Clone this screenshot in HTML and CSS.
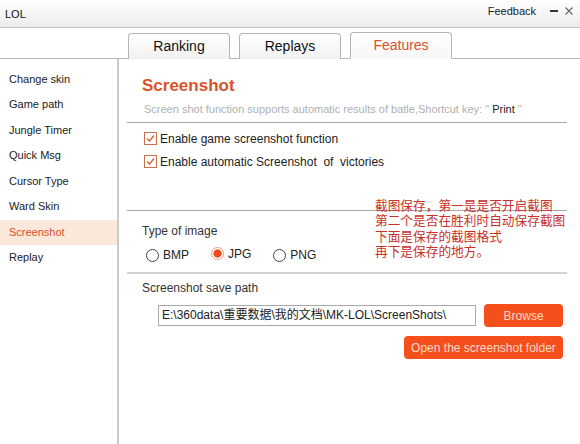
FILE: index.html
```html
<!DOCTYPE html>
<html lang="zh-CN">
<head>
  <meta charset="UTF-8">
  <title>LOL</title>
  <link rel="stylesheet" href="styles.css">
</head>
<body>

  <div class="titlebar">
    <span class="app-name">LOL</span>
    <div class="title-actions">
      <span class="feedback">Feedback</span>
      <span class="win-btn">
        <svg width="10" height="10" viewBox="0 0 10 10"><rect x="1" y="4" width="8" height="2" fill="#333"/></svg>
      </span>
      <span class="win-btn">
        <svg width="10" height="10" viewBox="0 0 10 10"><path d="M1.5 1.5 L8.5 8.5 M8.5 1.5 L1.5 8.5" stroke="#666" stroke-width="1.1"/></svg>
      </span>
    </div>
  </div>

  <div class="tabbar">
    <div class="tab">Ranking</div>
    <div class="tab">Replays</div>
    <div class="tab active">Features</div>
  </div>

  <div class="main">
    <ul class="sidebar">
      <li>Change skin</li>
      <li>Game path</li>
      <li>Jungle Timer</li>
      <li>Quick Msg</li>
      <li>Cursor Type</li>
      <li>Ward Skin</li>
      <li class="selected">Screenshot</li>
      <li>Replay</li>
    </ul>

    <div class="content">
      <div class="section head">
        <h2>Screenshot</h2>
        <p class="hint">Screen shot function supports automatic results of batle,Shortcut key: " <span class="key">Print</span> "</p>
      </div>

      <div class="section options">
        <label class="check"><span class="box"><svg width="11" height="11" viewBox="0 0 11 11"><path d="M2 5.5 L4.5 8 L9 2.5" fill="none" stroke="#d8582c" stroke-width="1.2"/></svg></span>Enable game screenshot function</label>
        <label class="check"><span class="box"><svg width="11" height="11" viewBox="0 0 11 11"><path d="M2 5.5 L4.5 8 L9 2.5" fill="none" stroke="#d8582c" stroke-width="1.2"/></svg></span>Enable automatic Screenshot&nbsp; of&nbsp; victories</label>
      </div>

      <div class="section image-type">
        <div class="label">Type of image</div>
        <div class="radios">
          <label class="radio"><span class="dot"></span>BMP</label>
          <label class="radio on"><span class="dot"></span>JPG</label>
          <label class="radio"><span class="dot"></span>PNG</label>
        </div>
      </div>

      <div class="section save-path">
        <div class="label">Screenshot save path</div>
        <div class="path-row">
          <div class="path-input">E:\360data\重要数据\我的文档\MK-LOL\ScreenShots\</div>
          <button class="btn browse">Browse</button>
        </div>
        <div class="folder-row">
          <button class="btn open">Open the screenshot folder</button>
        </div>
      </div>

      <!-- note written over the panel -->
      <div class="note">
        截图保存，第一是是否开启截图<br>
        第二个是否在胜利时自动保存截图<br>
        下面是保存的截图格式<br>
        再下是保存的地方。
      </div>
    </div>
  </div>

</body>
</html>
```

FILE: styles.css
```css
body {
  margin: 0;
  width: 580px;
  height: 444px;
  overflow: hidden;
  font-family: "Liberation Sans", Arial, "Noto Sans CJK SC", sans-serif;
  color: #222;
  background-color: white;
  display: flex;
  flex-direction: column;
}

/* title bar */
.titlebar {
  height: 28px;
  box-sizing: border-box;
  border-bottom: 1px solid #c4c4c4;
  background: linear-gradient(#ffffff, #ececec);
  display: flex;
  align-items: center;
  justify-content: space-between;
  padding: 0 6px 0 5px;
}

.app-name {
  font-size: 11px;
  color: #111;
}

.title-actions {
  display: flex;
  align-items: center;
  gap: 5px;
  margin-top: -5px;
}

.feedback {
  font-size: 11px;
  color: #222;
  margin-right: 8px;
}

.win-btn {
  display: flex;
}

/* tabs */
.tabbar {
  height: 31px;
  box-sizing: border-box;
  display: flex;
  align-items: flex-end;
  gap: 9px;
  padding-left: 128px;
  border-bottom: 1px solid #b8b8b8;
}

.tab {
  width: 100px;
  height: 25px;
  margin-bottom: -1px;
  border: 1px solid #b4b4b4;
  border-bottom: none;
  border-radius: 4px 4px 0 0;
  background: linear-gradient(#ffffff, #f1f1f1);
  font-size: 14px;
  text-align: center;
  line-height: 25px;
  color: #111;
}

.tab.active {
  color: #d8532b;
  background: linear-gradient(#ffffff, #f7f7f7);
  border-bottom: 1px solid #f7f7f7;
}

/* main area */
.main {
  flex: 1;
  display: flex;
  position: relative;
}

.sidebar {
  list-style: none;
  margin: 0;
  padding: 7.5px 0 0 0;
  width: 117px;
  flex: none;
  border-right: 2px solid #cbcbcb;
}

.sidebar li {
  height: 25.5px;
  line-height: 25.5px;
  padding-left: 9px;
  font-size: 11px;
  color: #222;
}

.sidebar li.selected {
  background-color: #fbe8da;
  color: #d8532b;
}

.content {
  flex: 1;
  min-width: 0;
  padding: 0 13px 0 8px;
  position: relative;
}

.section {
  padding-left: 15px;
}

.head {
  padding-top: 17px;
  padding-bottom: 6px;
  border-bottom: 1px solid #a8a8a8;
}

h2 {
  margin: 0;
  font-size: 17px;
  line-height: 20px;
  color: #d8532b;
}

.hint {
  margin: 6px 0 0 2px;
  font-size: 11px;
  line-height: 14px;
  color: #b0b0b0;
}

.hint .key {
  color: #222;
}

.options {
  padding-top: 4px;
  padding-bottom: 37px;
  border-bottom: 1px solid #a8a8a8;
}

.check {
  display: flex;
  align-items: center;
  height: 23px;
  font-size: 12px;
  padding-left: 2px;
}

.box {
  width: 11px;
  height: 11px;
  border: 1px solid #c9704f;
  margin-right: 3px;
  display: flex;
}

.label {
  font-size: 12px;
  color: #333;
}

.image-type {
  padding-top: 13px;
  padding-bottom: 10px;
  border-bottom: 2px solid #d2d2d2;
}

.radios {
  display: flex;
  gap: 22px;
  margin-top: 10px;
  padding-left: 4px;
}

.radio {
  display: flex;
  align-items: center;
  font-size: 12px;
  color: #222;
}

.radio .dot {
  width: 11px;
  height: 11px;
  border: 1px solid #444;
  border-radius: 50%;
  margin-right: 4px;
  box-sizing: content-box;
}

.radio.on {
  margin-top: -3px;
}

.radio.on .dot {
  border-color: #e8a080;
  background: radial-gradient(circle, #ee4a1a 0 3.8px, white 4.4px);
}

.save-path {
  padding-top: 7px;
  padding-right: 4px;
}

.path-row {
  display: flex;
  align-items: center;
  gap: 8px;
  margin-top: 9px;
  padding-left: 16px;
}

.path-input {
  width: 314px;
  height: 19px;
  border: 1px solid #a9a9a9;
  font-size: 12px;
  line-height: 19px;
  padding-left: 3px;
  box-sizing: content-box;
  white-space: nowrap;
}

.btn {
  border: none;
  border-radius: 4px;
  background-color: #f5501c;
  color: #ffd8c6;
  font-family: inherit;
  font-size: 12px;
  height: 23px;
  padding: 0;
}

.browse {
  width: 79px;
}

.folder-row {
  display: flex;
  justify-content: flex-end;
  margin-top: 9px;
}

.open {
  width: 159px;
}

.note {
  position: absolute;
  left: 256px;
  top: 140px;
  font-size: 12.7px;
  line-height: 15.3px;
  color: #c8302c;
}
```
